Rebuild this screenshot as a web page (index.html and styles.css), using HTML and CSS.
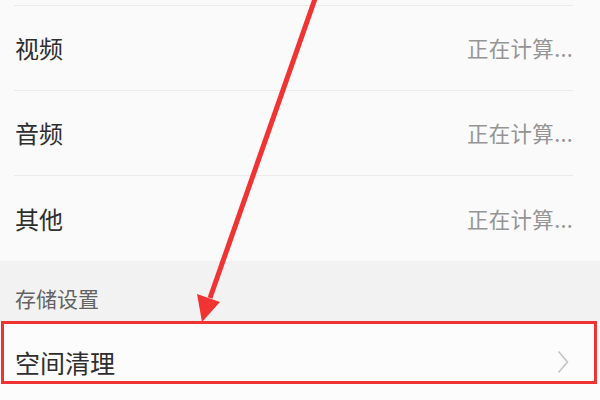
FILE: index.html
```html
<!DOCTYPE html>
<html lang="zh-CN">
<head>
<meta charset="utf-8">
<title>存储</title>
<link rel="stylesheet" href="styles.css">
</head>
<body>
<div class="screen">
  <div class="list">
    <div class="row"><span class="label">视频</span><span class="value">正在计算...</span></div>
    <div class="row"><span class="label">音频</span><span class="value">正在计算...</span></div>
    <div class="row"><span class="label">其他</span><span class="value">正在计算...</span></div>
  </div>
  <div class="section">存储设置</div>
  <div class="item">
    <span class="label">空间清理</span>
    <svg class="chevron" width="12" height="24" viewBox="0 0 12 24"><path d="M1.5 1.5 L10.5 12 L1.5 22.5" fill="none" stroke="#c4c4c4" stroke-width="1.6"/></svg>
  </div>
  <div class="highlight"></div>
  <svg class="arrow" width="600" height="400" viewBox="0 0 600 400">
    <line x1="316" y1="-4" x2="210" y2="298" stroke="#f03434" stroke-width="5"/>
    <polygon points="202,322 197,294 220,302" fill="#f03434"/>
  </svg>
</div>
</body>
</html>
```

FILE: styles.css
```css
html, body {
  margin: 0;
  padding: 0;
}
body {
  background: #fafafa;
  font-family: "Noto Sans CJK SC", "Noto Sans", sans-serif;
}
.screen {
  position: relative;
  width: 600px;
  height: 400px;
  overflow: hidden;
  background: #fafafa;
}
.list {
  padding-top: 5px;
  padding-left: 14px;
  padding-right: 27px;
}
.row {
  height: 84px;
  border-top: 1px solid #ebebeb;
  display: flex;
  align-items: center;
  justify-content: space-between;
  padding-left: 1px;
}
.row:last-child {
  height: 85px;
}
.label {
  font-size: 24px;
  line-height: 30px;
  color: #2e2e2e;
}
.value {
  font-size: 21.5px;
  line-height: 26px;
  color: #959595;
  letter-spacing: 0.3px;
}
.section {
  height: 60px;
  box-sizing: border-box;
  background: #f2f2f2;
  padding: 24px 0 0 15px;
  font-size: 21px;
  line-height: 26px;
  color: #626262;
}
.item {
  height: 82px;
  display: flex;
  align-items: center;
  justify-content: space-between;
  padding-left: 15px;
  padding-right: 31px;
  background: #fcfcfc;
}
.item .label {
  font-size: 25px;
}
.chevron {
  display: block;
}
.highlight {
  position: absolute;
  left: 1px;
  top: 321px;
  width: 590px;
  height: 57px;
  border: 3px solid #ef3232;
}
.arrow {
  position: absolute;
  left: 0;
  top: 0;
}
```
